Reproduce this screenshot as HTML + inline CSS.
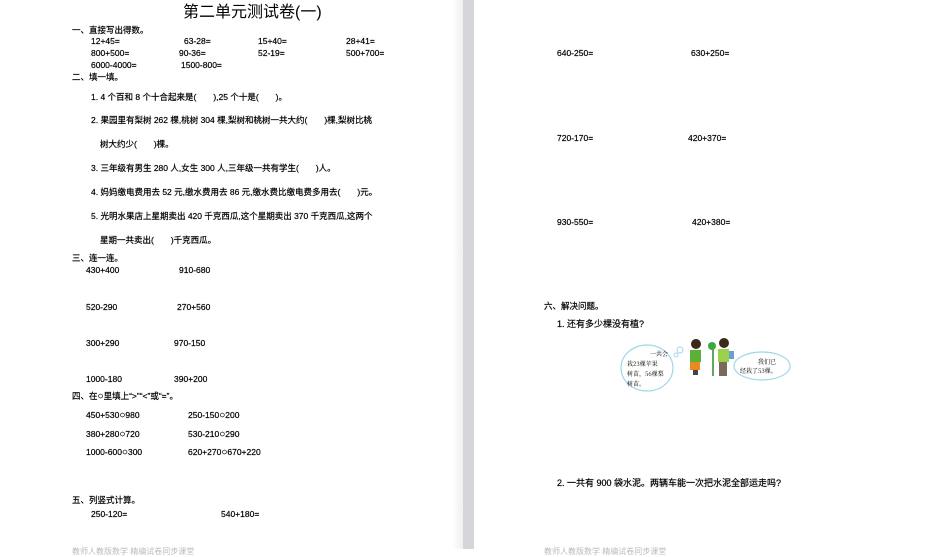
<!DOCTYPE html>
<html><head><meta charset="utf-8"><style>
body{margin:0;width:933px;height:549px;overflow:hidden;background:#fff;position:relative;font-family:"Liberation Sans","Noto Sans CJK SC",sans-serif;color:#000}
.t{position:absolute;font-size:8.5px;white-space:nowrap;line-height:10px;-webkit-text-stroke:0.2px #000}
.b{font-size:9px}
.o{font-size:10px}
#gap{position:absolute;left:463px;top:0;width:11px;height:549px;background:#d6d6da}
#sh{position:absolute;left:452px;top:0;width:11px;height:549px;background:linear-gradient(to right,#fff,#f0f0f2)}
.ft{position:absolute;top:546px;font-size:8px;color:#bbb;white-space:nowrap}
</style></head><body>
<div id="sh"></div><div id="gap"></div>
<div class="t" style="left:183px;top:4px;font-size:16px;line-height:18px;-webkit-text-stroke:0">第二单元测试卷(一)</div>
<div class="t" style="left:72px;top:25px">一、直接写出得数。</div>
<div class="t" style="left:91px;top:36px">12+45=</div><div class="t" style="left:184px;top:36px">63-28=</div><div class="t" style="left:258px;top:36px">15+40=</div><div class="t" style="left:346px;top:36px">28+41=</div>
<div class="t" style="left:91px;top:48px">800+500=</div><div class="t" style="left:179px;top:48px">90-36=</div><div class="t" style="left:258px;top:48px">52-19=</div><div class="t" style="left:346px;top:48px">500+700=</div>
<div class="t" style="left:91px;top:60px">6000-4000=</div><div class="t" style="left:181px;top:60px">1500-800=</div>
<div class="t" style="left:72px;top:72px">二、填一填。</div>
<div class="t" style="left:91px;top:92px">1. 4 个百和 8 个十合起来是(　　),25 个十是(　　)。</div>
<div class="t" style="left:91px;top:115px">2. 果园里有梨树 262 棵,桃树 304 棵,梨树和桃树一共大约(　　)棵,梨树比桃</div>
<div class="t" style="left:100px;top:139px">树大约少(　　)棵。</div>
<div class="t" style="left:91px;top:163px">3. 三年级有男生 280 人,女生 300 人,三年级一共有学生(　　)人。</div>
<div class="t" style="left:91px;top:187px">4. 妈妈缴电费用去 52 元,缴水费用去 86 元,缴水费比缴电费多用去(　　)元。</div>
<div class="t" style="left:91px;top:211px">5. 光明水果店上星期卖出 420 千克西瓜,这个星期卖出 370 千克西瓜,这两个</div>
<div class="t" style="left:100px;top:235px">星期一共卖出(　　)千克西瓜。</div>
<div class="t" style="left:72px;top:253px">三、连一连。</div>
<div class="t" style="left:86px;top:265px">430+400</div><div class="t" style="left:179px;top:265px">910-680</div>
<div class="t" style="left:86px;top:302px">520-290</div><div class="t" style="left:177px;top:302px">270+560</div>
<div class="t" style="left:86px;top:338px">300+290</div><div class="t" style="left:174px;top:338px">970-150</div>
<div class="t" style="left:86px;top:374px">1000-180</div><div class="t" style="left:174px;top:374px">390+200</div>
<div class="t" style="left:72px;top:391px">四、在<span class="o">○</span>里填上“>”“<”或“=”。</div>
<div class="t" style="left:86px;top:410px">450+530<span class="o">○</span>980</div><div class="t" style="left:188px;top:410px">250-150<span class="o">○</span>200</div>
<div class="t" style="left:86px;top:429px">380+280<span class="o">○</span>720</div><div class="t" style="left:188px;top:429px">530-210<span class="o">○</span>290</div>
<div class="t" style="left:86px;top:447px">1000-600<span class="o">○</span>300</div><div class="t" style="left:188px;top:447px">620+270<span class="o">○</span>670+220</div>
<div class="t" style="left:72px;top:495px">五、列竖式计算。</div>
<div class="t" style="left:91px;top:509px">250-120=</div><div class="t" style="left:221px;top:509px">540+180=</div>
<div class="ft" style="left:72px">教师人教版数学 精编试卷同步课堂</div>

<div class="t" style="left:557px;top:48px">640-250=</div><div class="t" style="left:691px;top:48px">630+250=</div>
<div class="t" style="left:557px;top:133px">720-170=</div><div class="t" style="left:688px;top:133px">420+370=</div>
<div class="t" style="left:557px;top:217px">930-550=</div><div class="t" style="left:692px;top:217px">420+380=</div>
<div class="t" style="left:544px;top:301px">六、解决问题。</div>
<div class="t b" style="left:557px;top:319px">1. 还有多少棵没有植?</div>
<svg style="position:absolute;left:620px;top:338px" width="175" height="56" viewBox="0 0 175 56">
<ellipse cx="27" cy="30" rx="26" ry="23" fill="#fff" stroke="#9fd6ea" stroke-width="1.2"/>
<circle cx="60" cy="12" r="3" fill="#fff" stroke="#9fd6ea"/><circle cx="56" cy="17" r="2" fill="#fff" stroke="#9fd6ea"/>
<text x="30" y="18" font-size="6" font-family="Noto Serif CJK SC,serif">一共会</text>
<text x="7" y="28" font-size="6" font-family="Noto Serif CJK SC,serif">栽23棵苹果</text>
<text x="7" y="38" font-size="6" font-family="Noto Serif CJK SC,serif">树苗，56棵梨</text>
<text x="7" y="48" font-size="6" font-family="Noto Serif CJK SC,serif">树苗。</text>
<circle cx="76" cy="6" r="5" fill="#3a2a1a"/><rect x="70" y="12" width="11" height="12" fill="#5cb038"/><rect x="70" y="24" width="10" height="8" fill="#e88a20"/><rect x="73" y="32" width="5" height="5" fill="#444"/>
<line x1="93" y1="6" x2="93" y2="38" stroke="#2a8a2a" stroke-width="1.5"/><circle cx="92" cy="8" r="4" fill="#3da83d"/>
<circle cx="104" cy="5" r="5" fill="#3a2a1a"/><rect x="98" y="11" width="11" height="13" fill="#9bd04a"/><rect x="109" y="13" width="5" height="8" fill="#6aa0d0"/><rect x="99" y="24" width="8" height="14" fill="#7a6a5a"/>
<ellipse cx="142" cy="28" rx="28" ry="14" fill="#fff" stroke="#9fd6ea" stroke-width="1.2"/>
<text x="138" y="26" font-size="6" font-family="Noto Serif CJK SC,serif">我们已</text>
<text x="120" y="35" font-size="6" font-family="Noto Serif CJK SC,serif">经栽了53棵。</text>
</svg>
<div class="t b" style="left:557px;top:478px">2. 一共有 900 袋水泥。两辆车能一次把水泥全部运走吗?</div>
<div class="ft" style="left:544px">教师人教版数学 精编试卷同步课堂</div>
</body></html>
